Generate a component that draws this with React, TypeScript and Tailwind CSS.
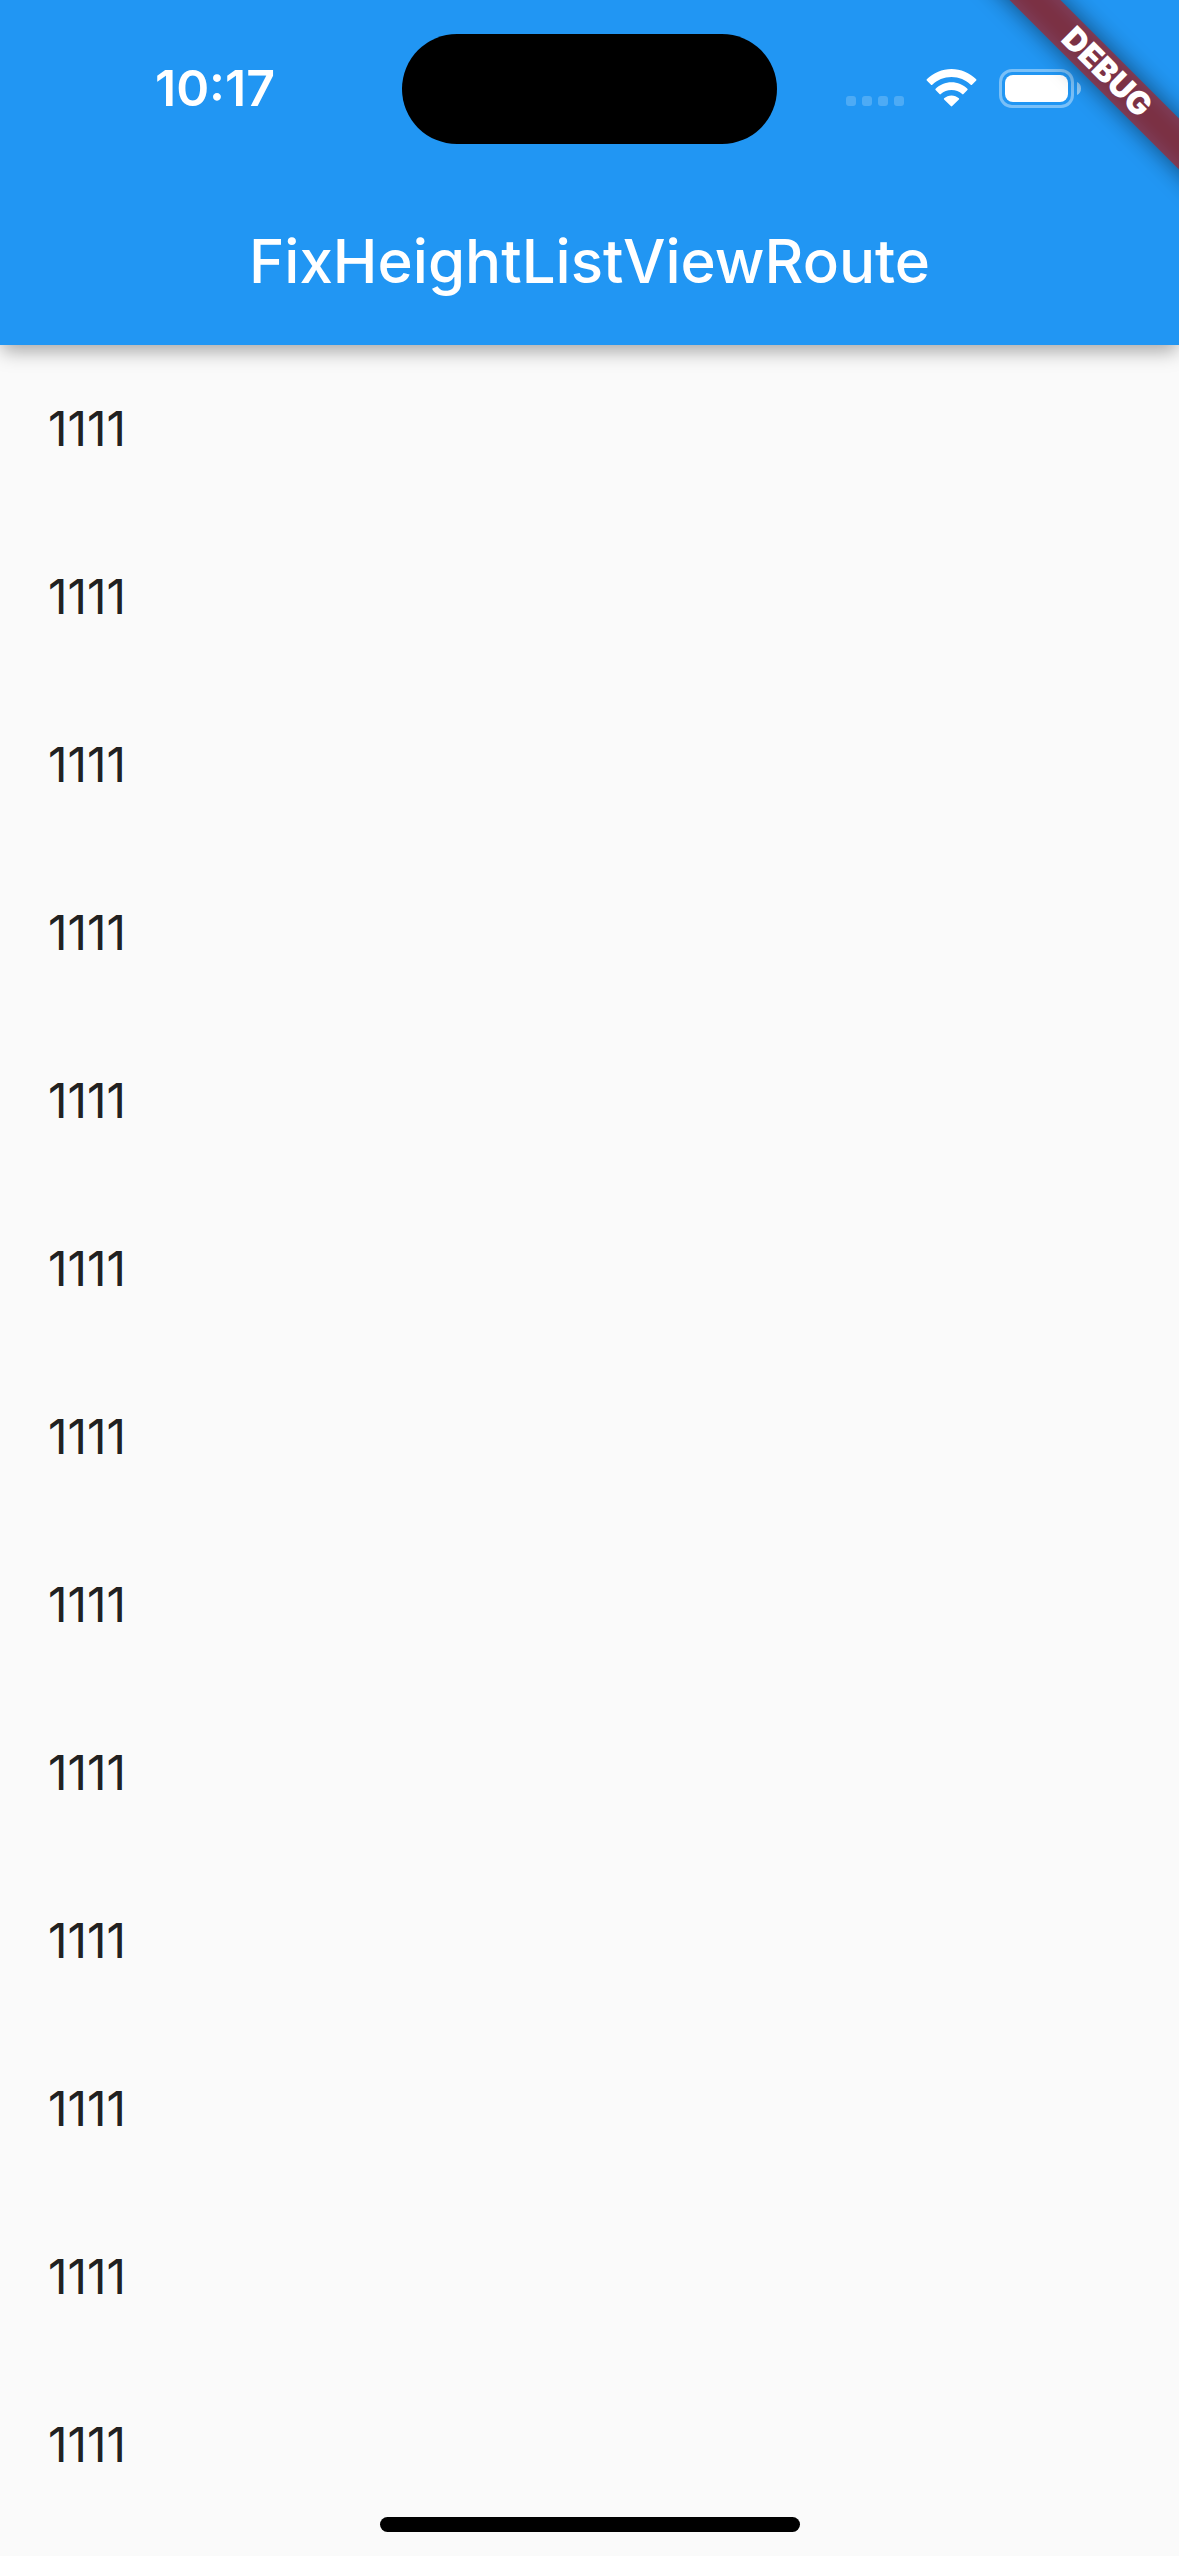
const rows = Array.from({ length: 13 }, () => "1111");

function SignalDots() {
  return (
    <div className="flex gap-[6px] pt-[27px]" aria-hidden="true">
      <span className="size-[10px] rounded-[3px] bg-white/20" />
      <span className="size-[10px] rounded-[3px] bg-white/20" />
      <span className="size-[10px] rounded-[3px] bg-white/20" />
      <span className="size-[10px] rounded-[3px] bg-white/20" />
    </div>
  );
}

function WifiIcon() {
  return (
    <svg className="h-[38px] w-[51px]" viewBox="0 0 51 38" fill="white" aria-label="Wi-Fi">
      <path d="M25.5 8C33 8 39.8 11 44.7 15.7C45.1 16.1 45.7 16.1 46 15.7L50.2 11.6C50.6 11.2 50.6 10.7 50.2 10.3C43.6 4 34.8 0 25.5 0S7.4 4 .8 10.3C.4 10.7.4 11.2.8 11.6L5 15.7C5.3 16.1 5.9 16.1 6.3 15.7C11.2 11 18 8 25.5 8Z" />
      <path d="M25.5 21C29.6 21 33.3 22.5 36.2 25.1C36.6 25.5 37.1 25.5 37.5 25.1L41.4 21.1C41.8 20.7 41.8 20.1 41.4 19.7C37.2 15.6 31.6 13.2 25.5 13.2S13.8 15.6 9.6 19.7C9.2 20.1 9.2 20.7 9.6 21.1L13.5 25.1C13.9 25.5 14.4 25.5 14.8 25.1C17.7 22.5 21.4 21 25.5 21Z" />
      <path d="M32.9 29.2C33.3 29.6 33.3 30.1 32.9 30.5L26.2 37.1C25.8 37.5 25.2 37.5 24.8 37.1L18.1 30.5C17.7 30.1 17.7 29.6 18.1 29.2C20.1 27.5 22.7 26.4 25.5 26.4S30.9 27.5 32.9 29.2Z" />
    </svg>
  );
}

function BatteryIcon() {
  return (
    <svg className="h-[39px] w-[82px]" viewBox="0 0 82 39" aria-label="Battery">
      <rect x="1.5" y="1.5" width="72" height="36" rx="11.5" fill="none" stroke="white" strokeOpacity=".4" strokeWidth="3" />
      <rect x="6" y="6" width="63" height="27" rx="8" fill="white" />
      <path d="M78 13V26C80.5 25 82 22.5 82 19.5S80.5 14 78 13Z" fill="white" fillOpacity=".5" />
    </svg>
  );
}

function DebugBanner() {
  return (
    <div className="pointer-events-none absolute top-0 right-0 size-[240px] overflow-hidden">
      <div className="absolute top-[54px] -right-[168px] h-[36px] w-[480px] rotate-45">
        <div className="absolute inset-0 bg-black/50 blur-[12px]" />
        <div className="relative flex h-full items-center justify-center bg-[#b71c1c]/63 text-[32px] leading-[36px] font-black text-white">
          DEBUG
        </div>
      </div>
    </div>
  );
}

export default function App() {
  return (
    <div className="relative flex min-h-screen flex-col bg-[#fafafa] font-['Inter',sans-serif]">
      <header className="relative z-10 bg-[#2196f3] text-white shadow-[0_8px_18px_-2px_rgba(0,0,0,0.34)]">
        <div className="grid h-[177px] grid-cols-[1fr_375px_1fr] items-start pt-[34px]">
          <time className="pl-[28px] text-center text-[50px] leading-[108px] font-semibold">10:17</time>
          <div className="h-[110px] rounded-full bg-black" />
          <div className="flex items-start justify-end gap-[22px] pt-[35px] pr-[98px]">
            <SignalDots />
            <WifiIcon />
            <BatteryIcon />
          </div>
        </div>
        <h1 className="h-[168px] text-center text-[60px] leading-[168px] font-medium">FixHeightListViewRoute</h1>
        <DebugBanner />
      </header>
      <ul className="flex-1">
        {rows.map((label, i) => (
          <li key={i} className="flex h-[168px] items-center px-[48px] text-[48px] leading-[60px] text-[#212121]">
            {label}
          </li>
        ))}
      </ul>
      <div className="absolute bottom-[24px] left-1/2 h-[15px] w-[420px] -translate-x-1/2 rounded-full bg-black" />
    </div>
  );
}
